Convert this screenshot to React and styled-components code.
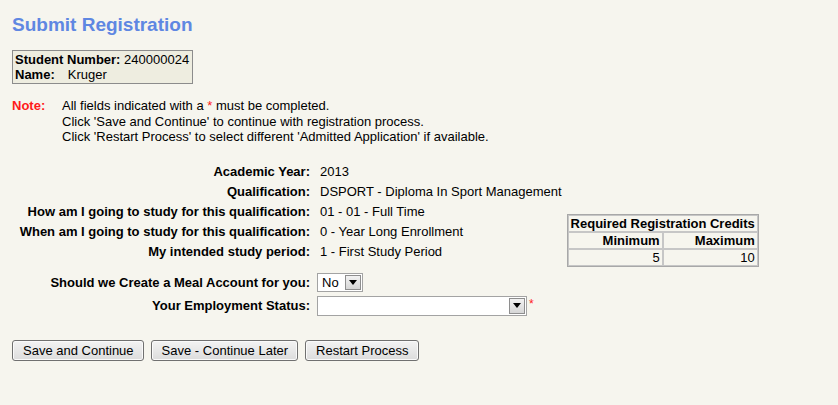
import React from "react";
import styled, { createGlobalStyle } from "styled-components";

const GlobalStyle = createGlobalStyle`
  html, body {
    margin: 0;
    padding: 0;
    background: #f6f5ee;
  }
  body {
    font-family: "Liberation Sans", Arial, sans-serif;
    font-size: 13px;
    color: #000;
  }
`;

const Page = styled.div`
  padding: 14px 12px 20px 12px;
  min-height: 405px;
  box-sizing: border-box;
`;

const Title = styled.h1`
  margin: 0;
  font-size: 19px;
  line-height: 22px;
  font-weight: bold;
  color: #5f87e2;
`;

const StudentWrap = styled.div`
  margin-top: 14px;
`;

const StudentBox = styled.div`
  display: inline-block;
  border: 1px solid #8c8c8c;
  background: #eeede0;
  padding: 1px 3px 1px 2px;
  line-height: 15px;
`;

const Bold = styled.span`
  font-weight: bold;
`;

const NameValue = styled.span`
  margin-left: 13px;
`;

const Note = styled.div`
  margin-top: 14px;
  display: grid;
  grid-template-columns: 50px auto;
  line-height: 15.5px;
`;

const NoteLabel = styled.div`
  color: #ff1a1a;
  font-weight: bold;
`;

const Star = styled.span`
  color: #ff1a1a;
`;

const InfoSection = styled.div`
  margin-top: 17px;
  display: flex;
  align-items: flex-start;
`;

const FormGrid = styled.div`
  display: grid;
  grid-template-columns: 298px auto;
  column-gap: ${(p) => p.$gap}px;
  row-gap: ${(p) => p.$rowGap || 0}px;
  grid-auto-rows: ${(p) => p.$rowH || "auto"};
  align-items: center;
  margin-top: ${(p) => p.$top || 0}px;
`;

const Label = styled.div`
  font-weight: bold;
  text-align: right;
  white-space: nowrap;
`;

const Value = styled.div`
  white-space: nowrap;
`;

const CreditsTable = styled.table`
  margin-left: 5px;
  margin-top: 52px;
  border-collapse: separate;
  border-spacing: 0;
  border: 1px solid #a8a8a8;
  font-size: 13px;
  line-height: 15px;

  th,
  td {
    border: 1px solid #c6c6c6;
    padding: 0 2px;
    text-align: right;
    width: 50%;
    white-space: nowrap;
  }
  th {
    font-weight: bold;
  }
`;

const HeadCell = styled.th`
  && {
    text-align: center;
  }
`;

const SelectField = styled.div`
  display: flex;
  align-items: flex-start;
  gap: 2px;
`;

const SelectBox = styled.div`
  display: inline-flex;
  align-items: stretch;
  justify-content: space-between;
  box-sizing: border-box;
  width: ${(p) => p.$w}px;
  height: ${(p) => p.$h}px;
  background: #fff;
  border: 1px solid #a3a3a3;
  padding: 1px;
`;

const SelectValue = styled.span`
  padding-left: 3px;
  line-height: ${(p) => p.$h - 4}px;
`;

const DropButton = styled.span`
  width: 16px;
  box-sizing: border-box;
  border: 1px solid #8e8e8e;
  background: linear-gradient(#f2f2f2, #d6d6d6);
  display: flex;
  align-items: center;
  justify-content: center;

  &::after {
    content: "";
    width: 0;
    height: 0;
    border-left: 4px solid transparent;
    border-right: 4px solid transparent;
    border-top: 5px solid #000;
  }
`;

const RequiredStar = styled.span`
  color: #ff1a1a;
  font-size: 12px;
  line-height: 12px;
  margin-top: 2px;
`;

const ButtonRow = styled.div`
  margin-top: 24px;
  display: flex;
  gap: 7px;
`;

const Button = styled.button`
  font-family: "Liberation Sans", Arial, sans-serif;
  font-size: 13px;
  color: #000;
  height: 21px;
  padding: 0 9px 0 10px;
  border: 1px solid #707070;
  border-radius: 3px;
  background: linear-gradient(#f3f3f3, #dcdcdc);
  box-shadow: inset 0 0 0 1px #fafafa;
  line-height: 19px;
  cursor: pointer;
`;

const info = [
  ["Academic Year:", "2013"],
  ["Qualification:", "DSPORT - Diploma In Sport Management"],
  ["How am I going to study for this qualification:", "01 - 01 - Full Time"],
  ["When am I going to study for this qualification:", "0 - Year Long Enrollment"],
  ["My intended study period:", "1 - First Study Period"],
];

function Select({ width, height, value, required }) {
  return (
    <SelectField>
      <SelectBox $w={width} $h={height}>
        <SelectValue $h={height}>{value}</SelectValue>
        <DropButton />
      </SelectBox>
      {required && <RequiredStar>*</RequiredStar>}
    </SelectField>
  );
}

export default function App() {
  return (
    <>
      <GlobalStyle />
      <Page>
        <Title>Submit Registration</Title>
        <StudentWrap>
          <StudentBox>
            <div>
              <Bold>Student Number:</Bold> 240000024
            </div>
            <div>
              <Bold>Name:</Bold>
              <NameValue>Kruger</NameValue>
            </div>
          </StudentBox>
        </StudentWrap>

        <Note>
          <NoteLabel>Note:</NoteLabel>
          <div>
            <div>
              All fields indicated with a <Star>*</Star> must be completed.
            </div>
            <div>Click 'Save and Continue' to continue with registration process.</div>
            <div>
              Click 'Restart Process' to select different 'Admitted Application' if available.
            </div>
          </div>
        </Note>

        <InfoSection>
          <FormGrid $gap={10} $rowH="20px">
            {info.map(([l, v]) => (
              <React.Fragment key={l}>
                <Label>{l}</Label>
                <Value>{v}</Value>
              </React.Fragment>
            ))}
          </FormGrid>
          <CreditsTable>
            <tbody>
              <tr>
                <HeadCell colSpan={2}>Required Registration Credits</HeadCell>
              </tr>
              <tr>
                <th>Minimum</th>
                <th>Maximum</th>
              </tr>
              <tr>
                <td>5</td>
                <td>10</td>
              </tr>
            </tbody>
          </CreditsTable>
        </InfoSection>

        <FormGrid $gap={7} $rowGap={4} $top={6}>
          <Label>Should we Create a Meal Account for you:</Label>
          <Select width={46} height={19} value="No" />
          <Label>Your Employment Status:</Label>
          <Select width={210} height={20} value="" required />
        </FormGrid>

        <ButtonRow>
          <Button>Save and Continue</Button>
          <Button>Save - Continue Later</Button>
          <Button>Restart Process</Button>
        </ButtonRow>
      </Page>
    </>
  );
}
